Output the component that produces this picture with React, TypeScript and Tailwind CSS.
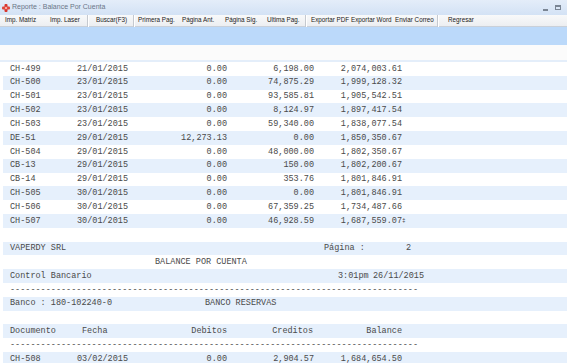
import React from "react";

const mono = { fontFamily: '"Liberation Mono", "Courier New", monospace' };
const sans = { fontFamily: '"Liberation Sans", Arial, sans-serif' };

type Row = { doc: string; fecha: string; deb: string; cred: string; bal: string; mark?: boolean };

const data: Row[] = [
  { doc: "CH-499", fecha: "21/01/2015", deb: "0.00", cred: "6,198.00", bal: "2,074,003.61" },
  { doc: "CH-500", fecha: "23/01/2015", deb: "0.00", cred: "74,875.29", bal: "1,999,128.32" },
  { doc: "CH-501", fecha: "23/01/2015", deb: "0.00", cred: "93,585.81", bal: "1,905,542.51" },
  { doc: "CH-502", fecha: "23/01/2015", deb: "0.00", cred: "8,124.97", bal: "1,897,417.54" },
  { doc: "CH-503", fecha: "23/01/2015", deb: "0.00", cred: "59,340.00", bal: "1,838,077.54" },
  { doc: "DE-51", fecha: "29/01/2015", deb: "12,273.13", cred: "0.00", bal: "1,850,350.67" },
  { doc: "CH-504", fecha: "29/01/2015", deb: "0.00", cred: "48,000.00", bal: "1,802,350.67" },
  { doc: "CB-13", fecha: "29/01/2015", deb: "0.00", cred: "150.00", bal: "1,802,200.67" },
  { doc: "CB-14", fecha: "29/01/2015", deb: "0.00", cred: "353.76", bal: "1,801,846.91" },
  { doc: "CH-505", fecha: "30/01/2015", deb: "0.00", cred: "0.00", bal: "1,801,846.91" },
  { doc: "CH-506", fecha: "30/01/2015", deb: "0.00", cred: "67,359.25", bal: "1,734,487.66" },
  { doc: "CH-507", fecha: "30/01/2015", deb: "0.00", cred: "46,928.59", bal: "1,687,559.07", mark: true },
];

function Line({ i, children }: { i: number; children?: React.ReactNode }) {
  const striped = i % 2 === 1;
  return (
    <div
      className={`flex h-[13.82px] items-center whitespace-nowrap pl-[7px] leading-none ${striped ? "bg-[#e6f0fc]" : "bg-white"}`}
    >
      {children}
    </div>
  );
}

function DataLine({ r }: { r: Row }) {
  return (
    <>
      <span className="w-[67px]">{r.doc}</span>
      <span className="w-[63px]">{r.fecha}</span>
      <span className="w-[87px] text-right">{r.deb}</span>
      <span className="w-[87px] text-right">{r.cred}</span>
      <span className="w-[88px] text-right">{r.bal}</span>
      {r.mark && <span className="text-[6px]">‡</span>}
    </>
  );
}

const dashes = "-".repeat(80);

function Dashes() {
  return <span>{dashes}</span>;
}

function Sep() {
  return <div className="h-[12px] w-[2px] shrink-0 border-l border-[#c5c9cf] bg-white" />;
}

function Btn({ w, children }: { w: string; children: React.ReactNode }) {
  return <span className={`${w} shrink-0`}>{children}</span>;
}

export default function App() {
  const lines: React.ReactNode[] = [];
  data.forEach((r) => lines.push(<DataLine r={r} />));
  lines.push(null);
  lines.push(
    <>
      <span className="w-[314px]">VAPERDY SRL</span>
      <span className="w-[60px]">Página :</span>
      <span className="w-[27px] text-right">2</span>
    </>
  );
  lines.push(<span className="pl-[145px]">BALANCE POR CUENTA</span>);
  lines.push(
    <>
      <span className="w-[328px]">Control Bancario</span>
      <span className="w-[35px]">3:01pm</span>
      <span>26/11/2015</span>
    </>
  );
  lines.push(<Dashes />);
  lines.push(
    <>
      <span className="w-[195px]">Banco : 180-102240-0</span>
      <span>BANCO RESERVAS</span>
    </>
  );
  lines.push(null);
  lines.push(
    <>
      <span className="w-[72px]">Documento</span>
      <span className="w-[58px]">Fecha</span>
      <span className="w-[87px] text-right">Debitos</span>
      <span className="w-[86px] text-right">Creditos</span>
      <span className="w-[89px] text-right">Balance</span>
    </>
  );
  lines.push(<Dashes />);
  lines.push(
    <DataLine r={{ doc: "CH-508", fecha: "03/02/2015", deb: "0.00", cred: "2,904.57", bal: "1,684,654.50" }} />
  );

  return (
    <div className="h-[363px] w-[567px] overflow-hidden bg-white">
      {/* title bar */}
      <div className="flex h-[15px] items-center bg-gradient-to-b from-[#e4edf9] to-[#d3e2f5] pl-[2px] pr-[6px]">
        <svg width="8" height="8" viewBox="0 0 8 8" className="mr-[2px] shrink-0">
          <rect x="2.5" y="0" width="3" height="8" rx="1" fill="#d8332a" />
          <rect x="0" y="2.5" width="8" height="3" rx="1" fill="#e0443a" />
          <circle cx="4" cy="4" r="1.2" fill="#f7b0a8" />
        </svg>
        <span className="whitespace-nowrap text-[7px] text-[#6b7687]" style={sans}>
          Reporte : Balance Por Cuenta
        </span>
        <div className="ml-auto flex items-center gap-[7px]">
          <div className="mt-[4px] h-[2px] w-[5px] bg-[#7a8594]" />
          <div className="h-[5px] w-[6px] border border-t-2 border-[#7a8594]" />
        </div>
      </div>
      {/* toolbar */}
      <div
        className="flex h-[12px] items-center whitespace-nowrap border-b border-[#c9d0d9] bg-gradient-to-b from-[#f8f9fa] to-[#eceef1] text-[6.3px] leading-none text-[#1b1b1b]"
        style={sans}
      >
        <span className="w-[5px] shrink-0" />
        <Btn w="w-[45px]">Imp. Matriz</Btn>
        <Btn w="w-[37px]">Imp. Laser</Btn>
        <Sep />
        <span className="w-[7px] shrink-0" />
        <Btn w="w-[37px]">Buscar(F3)</Btn>
        <Sep />
        <span className="w-[3px] shrink-0" />
        <Btn w="w-[44px]">Primera Pag.</Btn>
        <Btn w="w-[43px]">Página Ant.</Btn>
        <Btn w="w-[42px]">Página Sig.</Btn>
        <Btn w="w-[38px]">Ultima Pag.</Btn>
        <Sep />
        <span className="w-[4px] shrink-0" />
        <Btn w="w-[40px]">Exportar PDF</Btn>
        <Btn w="w-[44px]">Exportar Word</Btn>
        <Btn w="w-[42px]">Enviar Correo</Btn>
        <Sep />
        <span className="w-[9px] shrink-0" />
        <Btn w="w-[40px]">Regresar</Btn>
      </div>
      {/* blue band */}
      <div className="h-[18px] bg-[#bbd9fa]" />
      <div className="h-[17px] border-b-2 border-[#e4eefa] bg-[#fbfbfb]" />
      {/* report */}
      <div className="pl-[3px] text-[8.5px] text-[#4a4a4a]" style={mono}>
        {lines.map((c, i) => (
          <Line key={i} i={i}>
            {c}
          </Line>
        ))}
      </div>
    </div>
  );
}
